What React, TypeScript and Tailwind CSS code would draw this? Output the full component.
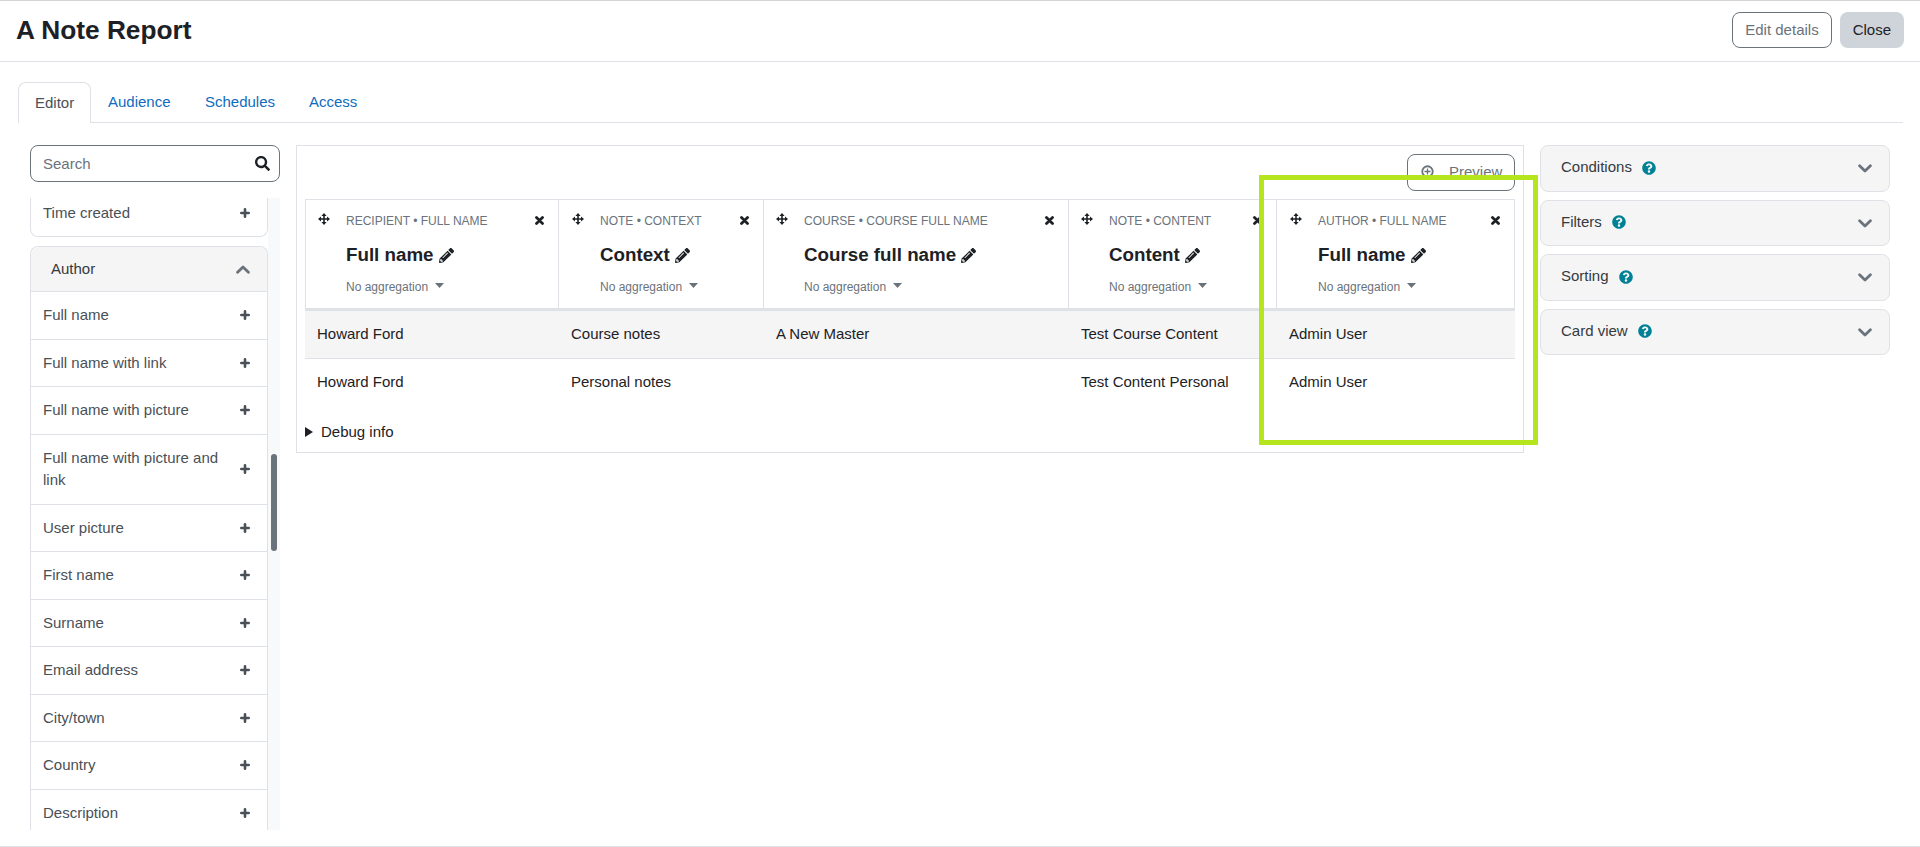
import React from "react";
import { FaPencilAlt, FaSearch, FaQuestionCircle } from "react-icons/fa";

const items: [string, string][] = [
  ["Full name", "h-[48px]"],
  ["Full name with link", "h-[47px]"],
  ["Full name with picture", "h-[48px]"],
  ["Full name with picture and link", "h-[70px]"],
  ["User picture", "h-[47px]"],
  ["First name", "h-[48px]"],
  ["Surname", "h-[47px]"],
  ["Email address", "h-[48px]"],
  ["City/town", "h-[47px]"],
  ["Country", "h-[48px]"],
  ["Description", "h-[47px]"],
];

const cols = [
  { w: "w-[254px]", pad: "pl-[12px]", top: "RECIPIENT • FULL NAME", name: "Full name", a: "Howard Ford", b: "Howard Ford" },
  { w: "w-[205px]", pad: "pl-[13px]", top: "NOTE • CONTEXT", name: "Context", a: "Course notes", b: "Personal notes" },
  { w: "w-[305px]", pad: "pl-[12px]", top: "COURSE • COURSE FULL NAME", name: "Course full name", a: "A New Master", b: "" },
  { w: "w-[208px]", pad: "pl-[12px]", top: "NOTE • CONTENT", name: "Content", a: "Test Course Content", b: "Test Content Personal" },
  { w: "w-[238px]", pad: "pl-[13px]", top: "AUTHOR • FULL NAME", name: "Full name", a: "Admin User", b: "Admin User" },
];

const panels = [
  ["Conditions", "h-[47px]"],
  ["Filters", "h-[46px]"],
  ["Sorting", "h-[47px]"],
  ["Card view", "h-[46px]"],
];

function Plus() {
  return (
    <svg width="10" height="10" viewBox="0 0 10 10" className="shrink-0 text-[#495057]" fill="none" stroke="currentColor" strokeWidth="2.6" strokeLinecap="round">
      <path d="M5 1.3v7.4M1.3 5h7.4" />
    </svg>
  );
}

function Move() {
  return (
    <svg width="12" height="12" viewBox="0 0 12 12" className="shrink-0 mt-[2px] text-[#1d2125]" fill="currentColor">
      <path d="M6 0l2.6 3H3.4zM6 12L3.4 9h5.2zM0 6l3-2.6v5.2zM12 6L9 8.6V3.4zM5.2 3h1.6v6H5.2zM3 5.2h6v1.6H3z" />
    </svg>
  );
}

function Cross() {
  return (
    <svg width="9" height="9" viewBox="0 0 9 9" className="absolute right-[14px] top-[16px] text-[#1d2125]" fill="none" stroke="currentColor" strokeWidth="2.8" strokeLinecap="round">
      <path d="M1.5 1.5l6 6M7.5 1.5l-6 6" />
    </svg>
  );
}

function Chevron({ up }: { up?: boolean }) {
  return (
    <svg width="14" height="9" viewBox="0 0 14 9" className="shrink-0 text-[#6a737b]" fill="none" stroke="currentColor" strokeWidth="2.8" strokeLinecap="round" strokeLinejoin="round">
      <path d={up ? "M1.6 7.2L7 2l5.4 5.2" : "M1.6 1.8L7 7l5.4-5.2"} />
    </svg>
  );
}

export default function App() {
  return (
    <div className="relative h-[847px] overflow-hidden bg-white text-[15px] text-[#1d2125] font-['Liberation_Sans',sans-serif]">
      <header className="h-[62px] border-t border-b border-t-[#d4d4d4] border-b-[#dee2e6] flex items-center justify-between pl-4 pr-[16px]">
        <h1 className="text-[26.25px] font-bold leading-none mt-[-2px]">A Note Report</h1>
        <div className="flex gap-2 mt-[-2px]">
          <button className="h-[36px] px-[12px] rounded-lg border border-[#6a737b] text-[#6a737b] bg-white">Edit details</button>
          <button className="h-[36px] px-[13px] rounded-lg bg-[#ced4da] text-[#1d2125]">Close</button>
        </div>
      </header>

      <nav className="mx-[18px] mt-5 w-[1885px] h-[41px] border-b border-[#dee2e6] flex">
        <div className="h-[41px] px-[16px] w-[73px] flex items-center border border-b-0 border-[#dee2e6] rounded-t-lg bg-white text-[#495057]">Editor</div>
        <a className="pl-[17px] w-[97px] flex items-center text-[#0f6cbf] whitespace-nowrap">Audience</a>
        <a className="pl-[17px] w-[104px] flex items-center text-[#0f6cbf] whitespace-nowrap">Schedules</a>
        <a className="pl-[17px] flex items-center text-[#0f6cbf] whitespace-nowrap">Access</a>
      </nav>

      <div className="flex items-start pl-[30px] pt-[22px]">
        <aside className="w-[250px] shrink-0">
          <div className="h-[37px] border border-[#6a737b] rounded-lg flex items-center justify-between pl-[12px] pr-[9px]">
            <span className="text-[#6a737b] mt-[1px]">Search</span>
            <FaSearch className="text-[15px] text-[#1d2125]" />
          </div>
          <div className="mt-4 h-[632px] overflow-hidden flex bg-[#f8f9fa]">
            <div className="w-[238px] shrink-0 bg-white">
              <div className="h-[39px] border-x border-b border-[#dee2e6] rounded-b-lg flex items-center justify-between pl-[12px] pr-[17px] text-[#495057] pb-[8px]">
                <span>Time created</span>
                <Plus />
              </div>
              <div className="mt-[9px] border-x border-t border-[#dee2e6] rounded-t-lg">
                <div className="h-[44px] bg-[#f5f5f5] rounded-t-lg flex items-center justify-between pl-[20px] pr-[17px]">
                  <span className="text-[#343a40]">Author</span>
                  <Chevron up />
                </div>
                {items.map(([label, h]) => (
                  <div key={label} className={`${h} border-t border-[#dee2e6] flex items-center justify-between pl-[12px] pr-[17px] text-[#495057] pb-[1px]`}>
                    <span className="w-[180px] leading-[22px]">{label}</span>
                    <Plus />
                  </div>
                ))}
              </div>
            </div>
            <div className="w-[12px] relative">
              <div className="absolute left-[3px] top-[256px] w-[6px] h-[97px] rounded-full bg-[#6a737b]" />
            </div>
          </div>
        </aside>

        <main className="ml-[16px] w-[1228px] h-[308px] border border-[#dee2e6] px-[8px] shrink-0">
          <div className="flex justify-end pt-[8px] h-[53px]">
            <button className="w-[108px] h-[37px] border border-[#6a737b] rounded-lg flex items-center pl-[13px] text-[#6a737b]">
              <svg width="13" height="13" viewBox="0 0 13 13" className="mr-[15px] mt-[-3px]" fill="none" stroke="currentColor">
                <circle cx="6.5" cy="6.5" r="5.25" strokeWidth="1.8" />
                <path d="M6.5 3.5v6M3.5 6.5h6" strokeWidth="1.3" />
              </svg>
              <span>Preview</span>
            </button>
          </div>
          <div className="w-[1210px] flex">
            {cols.map((c, i) => (
              <div key={i} className={c.w}>
                <div className={`h-[112px] border-t border-b-[3px] border-t-[#dee2e6] border-b-[#dee2e6] border-r border-r-[#dee2e6] ${i === 0 ? "border-l border-l-[#dee2e6]" : ""} ${c.pad} flex pt-[11px] relative`}>
                  <Move />
                  <div className="ml-[16px]">
                    <div className="text-[12px] leading-[20px] text-[#6a737b] whitespace-nowrap">{c.top}</div>
                    <div className="mt-[12px] flex items-center text-[18.75px] font-bold leading-[24px] whitespace-nowrap">
                      {c.name}
                      <FaPencilAlt className="text-[15px] ml-[5px]" />
                    </div>
                    <div className="mt-[11px] flex items-center text-[12px] leading-[18px] text-[#6a737b] whitespace-nowrap">
                      No aggregation
                      <svg width="9" height="5" viewBox="0 0 9 5" className="ml-[7px] mt-[-4px]" fill="currentColor"><path d="M0 0h9L4.5 5z" /></svg>
                    </div>
                  </div>
                  <Cross />
                </div>
                <div className="h-[48px] border-b border-[#dee2e6] bg-[#f5f5f5] flex items-center pl-[12px] whitespace-nowrap">{c.a}</div>
                <div className="h-[46px] flex items-center pl-[12px] whitespace-nowrap">{c.b}</div>
              </div>
            ))}
          </div>
          <div className="flex items-center mt-[16px] leading-[22px]">
            <svg width="8" height="10" viewBox="0 0 8 10" className="mr-[8px]" fill="#1d2125"><path d="M0 0l8 5-8 5z" /></svg>
            Debug info
          </div>
        </main>

        <section className="ml-[16px] w-[350px] shrink-0 flex flex-col gap-[8px]">
          {panels.map(([p, h]) => (
            <div key={p} className={`${h} border border-[#dee2e6] rounded-lg bg-[#f5f5f5] flex items-center justify-between pl-[20px] pr-[17px]`}>
              <div className="flex items-center gap-[10px] text-[#343a40] pb-[2px]">
                {p}
                <FaQuestionCircle className="text-[14px] text-[#008196]" />
              </div>
              <Chevron />
            </div>
          ))}
        </section>
      </div>

      <div className="absolute left-0 right-0 top-[846px] h-px bg-[#dee2e6]" />
      <div className="absolute left-[1259px] top-[175px] w-[279px] h-[270px] border-[5px] border-[#b5e61d]" />
    </div>
  );
}
